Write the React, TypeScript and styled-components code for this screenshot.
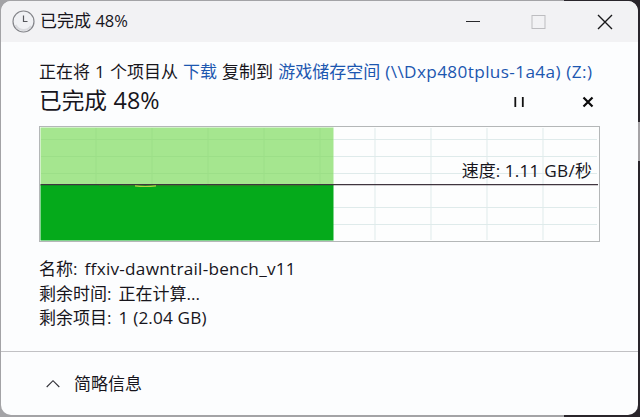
import React from "react";
import styled, { createGlobalStyle } from "styled-components";

const Global = createGlobalStyle`
  html, body { margin: 0; padding: 0; overflow: hidden; }
`;

const Desktop = styled.div`
  box-sizing: border-box;
  width: 640px;
  height: 417px;
  padding: 1px 2px 2px 1px;
  overflow: hidden;
  background:
    linear-gradient(#a5a3a6, #a5a3a6) 638px 122px / 2px 39px no-repeat,
    linear-gradient(90deg, #a3a3a6 564px, #29252b 564px);
  font-family: "Open Sans", "Noto Sans CJK SC", sans-serif;
  color: #17151c;
`;

const Window = styled.main`
  display: flex;
  flex-direction: column;
  height: 414px;
  border-radius: 10px;
  overflow: hidden;
  background: #fcfdfe;
`;

const TitleBar = styled.header`
  display: flex;
  align-items: center;
  height: 41px;
  padding-left: 11px;
  background: #f2f2f4;
`;

const TitleButtons = styled.div`
  display: flex;
  margin-left: auto;
`;

const TitleButton = styled.button`
  display: grid;
  place-items: center;
  width: 66px;
  height: 40px;
  padding: 0;
  border: 0;
  background: transparent;
`;

const Text = styled.span<{ $size?: number; $gap?: number; $words?: number }>`
  display: block;
  white-space: pre;
  font-size: ${(p) => p.$size ?? 17}px;
  line-height: 24px;
  margin-left: ${(p) => p.$gap ?? 0}px;
  word-spacing: ${(p) => p.$words ?? 0}px;
`;

const Title = styled(Text)`
  margin-bottom: 2px;
`;

const Latin = styled.span<{ $size?: number; $track?: number }>`
  font-size: ${(p) => p.$size ?? 17.2}px;
  letter-spacing: ${(p) => p.$track ?? 0}px;
`;

const Label = styled.span`
  margin-right: 2.7px;
`;

const Link = styled.a`
  color: #1c57b0;
`;

const Content = styled.section`
  height: 309px;
  padding: 18px 38px 0;
  box-sizing: border-box;
`;

const Heading = styled.div`
  display: flex;
  align-items: center;
  height: 30px;
  margin-top: 2px;
`;

const HeadingText = styled(Text)`
  margin-bottom: 2px;
`;

const Actions = styled.div`
  display: flex;
  align-items: center;
  gap: 57px;
  margin: 2px 6px 0 auto;
`;

const Chart = styled.div`
  position: relative;
  width: 561px;
  height: 116px;
  margin-top: 10px;
`;

const Speed = styled.div`
  position: absolute;
  top: 33px;
  right: 8px;
`;

const Details = styled.div`
  display: grid;
  grid-auto-rows: 24.5px;
  margin-top: 15px;
`;

const Footer = styled.footer`
  display: flex;
  align-items: center;
  flex: 1;
  padding-left: 45px;
  border-top: 1px solid #c1c1c4;
`;

const columns = [57, 113, 169, 225, 281, 336, 392, 448, 504];
const rows = [13.5, 30.5, 47.5, 64.5, 81.5, 98.5];

function SpeedGraph() {
  return (
    <svg width="561" height="116" viewBox="0 0 561 116" display="block">
      <rect x="0.5" y="0.5" width="560" height="115" fill="#fdfefe" stroke="#b4b7b8" />
      <g stroke="#dfebeb">
        {columns.map((x) => <path key={x} d={`M${x} 2V114`} />)}
        {rows.filter((y) => y !== 64.5).map((y) => <path key={y} d={`M2 ${y}H558`} />)}
      </g>
      <rect x="1.5" y="1.5" width="293" height="58" fill="#a5e68f" />
      <g stroke="#9cdf88">
        {columns.slice(0, 5).map((x) => <path key={x} d={`M${x} 2V59`} />)}
        {rows.slice(0, 3).map((y) => <path key={y} d={`M2 ${y}H294`} />)}
      </g>
      <rect x="1.5" y="59" width="293" height="55.5" fill="#05aa1b" />
      <path d="M1.5 58.7H559" stroke="#40353f" strokeWidth="1.2" />
      <path d="M60 59.8H70M83 59.8H153M168 59.8H275" stroke="#387d24" strokeWidth="0.8" />
      <path d="M96 59.9Q106 61 117 59.9" fill="none" stroke="#b8d445" strokeWidth="1.1" />
    </svg>
  );
}

export default function App() {
  return (
    <>
      <Global />
      <Desktop>
        <Window>
          <TitleBar>
            <svg width="24" height="24" viewBox="0 0 24 24">
              <circle cx="11.5" cy="11.5" r="10.5" fill="#f0f1f4" stroke="#85868b" strokeWidth="1.2" />
              <path d="M3.5 15A9 9 0 0 0 19 16" fill="none" stroke="#d9dade" strokeWidth="2" />
              <path d="M11.5 5.5V11.5H15.5" fill="none" stroke="#55565b" strokeWidth="1.2" />
            </svg>
            <Title $gap={4}>已完成 <Latin $size={16.5}>48%</Latin></Title>
            <TitleButtons>
              <TitleButton aria-label="最小化">
                <svg width="16" height="16"><path d="M1 7.5H15" stroke="#29292c" strokeWidth="1.1" /></svg>
              </TitleButton>
              <TitleButton aria-label="最大化">
                <svg width="16" height="16"><rect x="1" y="1.5" width="13" height="13" fill="none" stroke="#bdbdc0" /></svg>
              </TitleButton>
              <TitleButton aria-label="关闭">
                <svg width="16" height="16"><path d="M1 1L15 15M15 1L1 15" stroke="#18181a" strokeWidth="1.4" /></svg>
              </TitleButton>
            </TitleButtons>
          </TitleBar>
          <Content>
            <Text $words={0.65}>
              正在将 <Latin>1</Latin> 个项目从 <Link>下载</Link> 复制到{" "}
              <Link>游戏储存空间 <Latin $track={0.37}>(\\Dxp480tplus-1a4a) (Z:)</Latin></Link>
            </Text>
            <Heading>
              <HeadingText $size={22.7} $words={0.6}>已完成 <Latin $size={23.3}>48%</Latin></HeadingText>
              <Actions>
                <svg width="12" height="12"><path d="M2.3 1V11M9.8 1V11" stroke="#111" strokeWidth="1.8" /></svg>
                <svg width="12" height="12"><path d="M1.5 1.5L10.5 10.5M10.5 1.5L1.5 10.5" stroke="#0b0b0c" strokeWidth="2.2" /></svg>
              </Actions>
            </Heading>
            <Chart>
              <SpeedGraph />
              <Speed><Text>速度: <Latin $track={0.25}>1.11 GB/</Latin>秒</Text></Speed>
            </Chart>
            <Details>
              <Text><Label>名称:</Label> <Latin $track={0.25}>ffxiv-dawntrail-bench_v11</Latin></Text>
              <Text><Label>剩余时间:</Label> 正在计算...</Text>
              <Text><Label>剩余项目:</Label> <Latin $track={0.15}>1 (2.04 GB)</Latin></Text>
            </Details>
          </Content>
          <Footer>
            <svg width="14" height="10"><path d="M0.7 8L7 1.7L13.3 8" fill="none" stroke="#303036" strokeWidth="1.1" /></svg>
            <Text $gap={14}>简略信息</Text>
          </Footer>
        </Window>
      </Desktop>
    </>
  );
}
